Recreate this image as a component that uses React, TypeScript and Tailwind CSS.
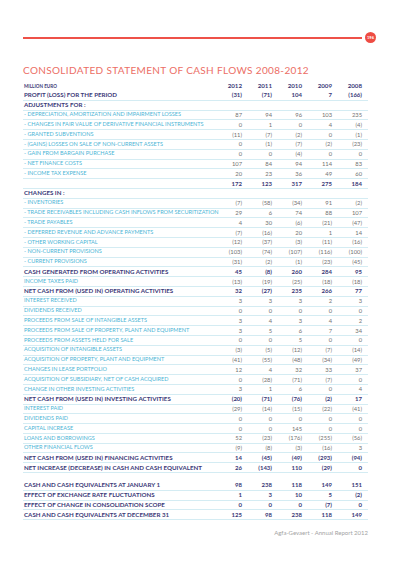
import React from "react";

type Row = {
  label: string;
  values?: string[];
  bold?: boolean;
};

const rows: Row[] = [
  { label: "PROFIT (LOSS) FOR THE PERIOD", values: ["(31)", "(71)", "104", "7", "(166)"], bold: true },
  { label: "ADJUSTMENTS FOR :", bold: true },
  { label: "- DEPRECIATION, AMORTIZATION AND IMPAIRMENT LOSSES", values: ["87", "94", "96", "103", "235"] },
  { label: "- CHANGES IN FAIR VALUE OF DERIVATIVE FINANCIAL INSTRUMENTS", values: ["0", "1", "0", "4", "(4)"] },
  { label: "- GRANTED SUBVENTIONS", values: ["(11)", "(7)", "(2)", "0", "(1)"] },
  { label: "- (GAINS) LOSSES ON SALE OF NON-CURRENT ASSETS", values: ["0", "(1)", "(7)", "(2)", "(23)"] },
  { label: "- GAIN FROM BARGAIN PURCHASE", values: ["0", "0", "(4)", "0", "0"] },
  { label: "- NET FINANCE COSTS", values: ["107", "84", "94", "114", "83"] },
  { label: "- INCOME TAX EXPENSE", values: ["20", "23", "36", "49", "60"] },
  { label: "", values: ["172", "123", "317", "275", "184"], bold: true },
  { label: "CHANGES IN :", bold: true },
  { label: "- INVENTORIES", values: ["(7)", "(58)", "(34)", "91", "(2)"] },
  { label: "- TRADE RECEIVABLES INCLUDING CASH INFLOWS FROM SECURITIZATION", values: ["29", "6", "74", "88", "107"] },
  { label: "- TRADE PAYABLES", values: ["4", "30", "(6)", "(21)", "(47)"] },
  { label: "- DEFERRED REVENUE AND ADVANCE PAYMENTS", values: ["(7)", "(16)", "20", "1", "14"] },
  { label: "- OTHER WORKING CAPITAL", values: ["(12)", "(37)", "(3)", "(11)", "(16)"] },
  { label: "- NON-CURRENT PROVISIONS", values: ["(103)", "(74)", "(107)", "(116)", "(100)"] },
  { label: "- CURRENT PROVISIONS", values: ["(31)", "(2)", "(1)", "(23)", "(45)"] },
  { label: "CASH GENERATED FROM OPERATING ACTIVITIES", values: ["45", "(8)", "260", "284", "95"], bold: true },
  { label: "INCOME TAXES PAID", values: ["(13)", "(19)", "(25)", "(18)", "(18)"] },
  { label: "NET CASH FROM (USED IN) OPERATING ACTIVITIES", values: ["32", "(27)", "235", "266", "77"], bold: true },
  { label: "INTEREST RECEIVED", values: ["3", "3", "3", "2", "3"] },
  { label: "DIVIDENDS RECEIVED", values: ["0", "0", "0", "0", "0"] },
  { label: "PROCEEDS FROM SALE OF INTANGIBLE ASSETS", values: ["3", "4", "3", "4", "2"] },
  { label: "PROCEEDS FROM SALE OF PROPERTY, PLANT AND EQUIPMENT", values: ["3", "5", "6", "7", "34"] },
  { label: "PROCEEDS FROM ASSETS HELD FOR SALE", values: ["0", "0", "5", "0", "0"] },
  { label: "ACQUISITION OF INTANGIBLE ASSETS", values: ["(3)", "(5)", "(12)", "(7)", "(14)"] },
  { label: "ACQUISITION OF PROPERTY, PLANT AND EQUIPMENT", values: ["(41)", "(55)", "(48)", "(34)", "(49)"] },
  { label: "CHANGES IN LEASE PORTFOLIO", values: ["12", "4", "32", "33", "37"] },
  { label: "ACQUISITION OF SUBSIDIARY, NET OF CASH ACQUIRED", values: ["0", "(28)", "(71)", "(7)", "0"] },
  { label: "CHANGE IN OTHER INVESTING ACTIVITIES", values: ["3", "1", "6", "0", "4"] },
  { label: "NET CASH FROM (USED IN) INVESTING ACTIVITIES", values: ["(20)", "(71)", "(76)", "(2)", "17"], bold: true },
  { label: "INTEREST PAID", values: ["(29)", "(14)", "(15)", "(22)", "(41)"] },
  { label: "DIVIDENDS PAID", values: ["0", "0", "0", "0", "0"] },
  { label: "CAPITAL INCREASE", values: ["0", "0", "145", "0", "0"] },
  { label: "LOANS AND BORROWINGS", values: ["52", "(23)", "(176)", "(255)", "(56)"] },
  { label: "OTHER FINANCIAL FLOWS", values: ["(9)", "(8)", "(3)", "(16)", "3"] },
  { label: "NET CASH FROM (USED IN) FINANCING ACTIVITIES", values: ["14", "(45)", "(49)", "(293)", "(94)"], bold: true },
  { label: "NET INCREASE (DECREASE) IN CASH AND CASH EQUIVALENT", values: ["26", "(143)", "110", "(29)", "0"], bold: true },
];

const closing: Row[] = [
  { label: "CASH AND CASH EQUIVALENTS AT JANUARY 1", values: ["98", "238", "118", "149", "151"], bold: true },
  { label: "EFFECT OF EXCHANGE RATE FLUCTUATIONS", values: ["1", "3", "10", "5", "(2)"], bold: true },
  { label: "EFFECT OF CHANGE IN CONSOLIDATION SCOPE", values: ["0", "0", "0", "(7)", "0"], bold: true },
  { label: "CASH AND CASH EQUIVALENTS AT DECEMBER 31", values: ["125", "98", "238", "118", "149"], bold: true },
];

const years = ["2012", "2011", "2010", "2009", "2008"];

const TableRow = ({ row }: { row: Row }) => (
  <div className="flex items-center h-[9.8px] border-b border-[#d4ecf3] pr-[6px]">
    <div
      className={`flex-1 min-w-0 whitespace-nowrap pl-[1px] ${
        row.bold ? "font-bold text-[6.2px] text-[#3b3a78]" : "text-[5.55px] text-[#4db5d6]"
      }`}
    >
      {row.label}
    </div>
    {(row.values ?? ["", "", "", "", ""]).map((v, i) => (
      <div
        key={i}
        className={`w-[30px] shrink-0 text-right ${
          row.bold ? "font-bold text-[6px] text-[#3b3a78]" : "text-[5.8px] text-[#737373]"
        }`}
      >
        {v}
      </div>
    ))}
  </div>
);

export default function App() {
  return (
    <div className="w-[400px] h-[566px] bg-white font-['Lato','Open_Sans',sans-serif] overflow-hidden">
      <div className="flex items-center gap-[3px] pt-[32px] pl-[23px] pr-[24px]">
        <div className="flex-1 h-[2px] bg-[#ee5148]" />
        <div className="w-[11px] h-[11px] rounded-full bg-[#ee4c43] flex items-center justify-center text-white text-[4px] font-bold">
          196
        </div>
      </div>

      <h1 className="mt-[21px] pl-[23px] text-[10px] leading-[12px] text-[#ec6e65] tracking-[0.35px]">
        CONSOLIDATED STATEMENT OF CASH FLOWS 2008-2012
      </h1>

      <div className="mt-[6px] ml-[23px] w-[345px] leading-none">
        <div className="flex items-center h-[9px] pr-[6px] font-bold text-[#3b3a78]">
          <div className="flex-1 pl-[1px] text-[4.6px]">MILLION EURO</div>
          {years.map((y) => (
            <div key={y} className="w-[30px] shrink-0 text-right text-[6.2px]">
              {y}
            </div>
          ))}
        </div>
        {rows.map((r, i) => (
          <TableRow key={i} row={r} />
        ))}
        <div className="h-[8px]" />
        {closing.map((r, i) => (
          <TableRow key={i} row={r} />
        ))}
      </div>

      <div className="mt-[8px] w-[368px] text-right text-[6px] text-[#a3a3a3]">
        Agfa-Gevaert - Annual Report 2012
      </div>
    </div>
  );
}
